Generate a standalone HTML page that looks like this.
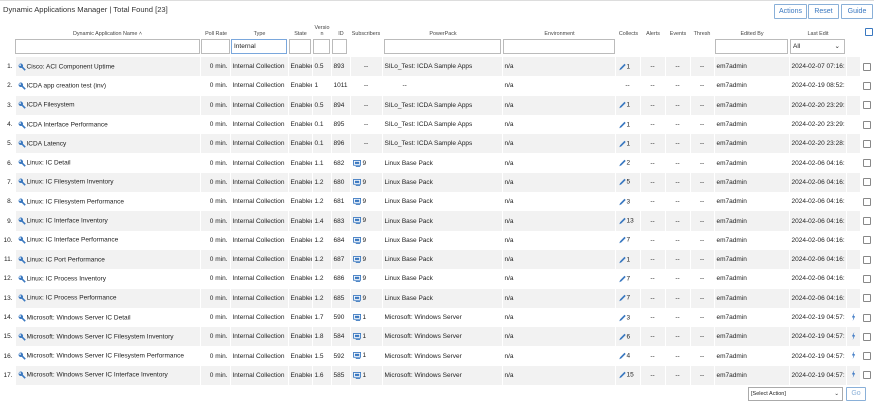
<!DOCTYPE html>
<html><head><meta charset="utf-8"><style>
*{box-sizing:border-box;margin:0;padding:0}
body{width:874px;height:400px;overflow:hidden;background:#fff;font-family:"Liberation Sans",sans-serif;font-size:6.4px;color:#222;position:relative}
.title{position:absolute;left:3px;top:5px;font-size:7.6px;color:#333}
.topline{position:absolute;left:0;top:0;width:874px;height:1px;background:#ddd}
.btn{position:absolute;top:4px;height:15px;border:1px solid #8ab0d8;color:#3a78c0;font-size:7px;text-align:center;line-height:13px;background:#fff;border-radius:1px}
.h{position:absolute;top:31px;font-size:5.4px;color:#444;text-align:center}
.inp{position:absolute;top:39px;height:15px;border:1px solid #bbb;background:#fff;font-size:6.5px;padding-left:2px;line-height:13px}
table{position:absolute;left:0;top:57px;border-collapse:collapse;table-layout:fixed;width:874px}
td{height:19.3px;padding:0 2px;white-space:nowrap;overflow:hidden;border-left:1px solid #fff;font-size:6.5px}
tr.g td{background:#f2f2f2}
tr.g td.n,tr td.n{background:#fff;text-align:right;padding-right:2px;border:0}
td.r{text-align:right}
td.c{text-align:center}
td.ck{background:#fff!important}
.cb{display:inline-block;width:8px;height:8px;border:1px solid #888;border-radius:1px;background:#fff;vertical-align:middle}
.wr{display:inline-block;width:8px;height:8px;vertical-align:middle;margin-right:1px}
.pen{display:inline-block;width:9px;height:8px;vertical-align:middle}
.sub{display:inline-block;width:9px;height:7px;vertical-align:middle;margin-right:1px}
</style></head><body>
<div class="topline"></div>
<div class="title">Dynamic Applications Manager | Total Found [23]</div>
<div class="btn" style="left:774px;width:33px">Actions</div>
<div class="btn" style="left:808px;width:31px">Reset</div>
<div class="btn" style="left:841px;width:32px">Guide</div>
<div class="h" style="left:15px;width:185px">Dynamic Application Name ˄</div>
<div class="h" style="left:201px;width:30px">Poll Rate</div>
<div class="h" style="left:231px;width:57px">Type</div>
<div class="h" style="left:289px;width:23px">State</div>
<div class="h" style="left:312px;width:20px;top:25px;line-height:6px">Versio<br>n</div>
<div class="h" style="left:332px;width:18px">ID</div>
<div class="h" style="left:350px;width:32px">Subscribers</div>
<div class="h" style="left:383px;width:120px">PowerPack</div>
<div class="h" style="left:503px;width:113px">Environment</div>
<div class="h" style="left:616px;width:25px">Collects</div>
<div class="h" style="left:641px;width:24px">Alerts</div>
<div class="h" style="left:666px;width:24px">Events</div>
<div class="h" style="left:690px;width:24px">Thresh</div>
<div class="h" style="left:715px;width:74px">Edited By</div>
<div class="h" style="left:790px;width:56px">Last Edit</div>
<div style="position:absolute;left:865px;top:28px;width:8px;height:8px;border:1px solid #3a78c0;border-radius:1px"></div>
<div class="inp" style="left:15px;width:185px"></div>
<div class="inp" style="left:201px;width:29px"></div>
<div class="inp" style="left:231px;width:56px;border-color:#7aa7dc">Internal</div>
<div class="inp" style="left:289px;width:22px"></div>
<div class="inp" style="left:313px;width:17px"></div>
<div class="inp" style="left:332px;width:15px"></div>
<div class="inp" style="left:384px;width:117px"></div>
<div class="inp" style="left:503px;width:112px"></div>
<div class="inp" style="left:715px;width:73px"></div>
<div class="inp" style="left:790px;width:55px">All<span style="position:absolute;right:4px;top:0">⌄</span></div>
<svg width="0" height="0" style="position:absolute"><defs>
<symbol id="w" viewBox="0 0 10 10"><circle cx="3.5" cy="3.5" r="2.8" fill="#3a78c0"/><circle cx="2.6" cy="2.6" r="1" fill="#fff"/><path d="M4.5 4.5L9 9" stroke="#3a78c0" stroke-width="2"/></symbol>
<symbol id="p" viewBox="0 0 10 10"><path d="M1 9L2 6.5L7.5 1L9 2.5L3.5 8Z" fill="#3a78c0"/></symbol>
<symbol id="s" viewBox="0 0 10 8"><rect x="0.5" y="0.5" width="8" height="5.5" fill="#fff" stroke="#3a78c0"/><rect x="2" y="2" width="5" height="2.5" fill="#3a78c0"/><path d="M3 7.5H8" stroke="#3a78c0"/></symbol>
<symbol id="b" viewBox="0 0 6 10"><path d="M4 0L1 5.5H3L2 10L5 4H3Z" fill="#2f6fc0"/></symbol>
</defs></svg>
<table>
<colgroup><col style="width:15px"><col style="width:185px"><col style="width:30px"><col style="width:58px"><col style="width:24px"><col style="width:19px"><col style="width:19px"><col style="width:32px"><col style="width:120px"><col style="width:113px"><col style="width:25px"><col style="width:25px"><col style="width:25px"><col style="width:24px"><col style="width:75px"><col style="width:57px"><col style="width:14px"><col style="width:14px"></colgroup>
<tbody id="tb"></tbody>
</table>
<div style="position:absolute;left:748px;top:387px;width:95px;height:14px;border:1px solid #aaa;font-size:5.5px;padding-left:2px;line-height:12px">[Select Action]<span style="position:absolute;right:3px">⌄</span></div>
<div class="btn" style="left:846px;top:387px;width:20px;height:14px;line-height:12px;color:#8ab0d8">Go</div>
<script>
var S="SILo_Test: ICDA Sample Apps",L="Linux Base Pack",M="Microsoft: Windows Server";
var d=[
["Cisco: ACI Component Uptime","0.5","893","--",S,"1","2024-02-07 07:16:",0],
["ICDA app creation test (inv)","1","1011","--","--","--","2024-02-19 08:52:",0],
["ICDA Filesystem","0.5","894","--",S,"1","2024-02-20 23:29:",0],
["ICDA Interface Performance","0.1","895","--",S,"1","2024-02-20 23:29:",0],
["ICDA Latency","0.1","896","--",S,"1","2024-02-20 23:28:",0],
["Linux: IC Detail","1.1","682","9",L,"2","2024-02-06 04:16:",0],
["Linux: IC Filesystem Inventory","1.2","680","9",L,"5","2024-02-06 04:16:",0],
["Linux: IC Filesystem Performance","1.2","681","9",L,"3","2024-02-06 04:16:",0],
["Linux: IC Interface Inventory","1.4","683","9",L,"13","2024-02-06 04:16:",0],
["Linux: IC Interface Performance","1.2","684","9",L,"7","2024-02-06 04:16:",0],
["Linux: IC Port Performance","1.2","687","9",L,"1","2024-02-06 04:16:",0],
["Linux: IC Process Inventory","1.2","686","9",L,"7","2024-02-06 04:16:",0],
["Linux: IC Process Performance","1.2","685","9",L,"7","2024-02-06 04:16:",0],
["Microsoft: Windows Server IC Detail","1.7","590","1",M,"3","2024-02-19 04:57:",1],
["Microsoft: Windows Server IC Filesystem Inventory","1.8","584","1",M,"6","2024-02-19 04:57:",1],
["Microsoft: Windows Server IC Filesystem Performance","1.5","592","1",M,"4","2024-02-19 04:57:",1],
["Microsoft: Windows Server IC Interface Inventory","1.6","585","1",M,"15","2024-02-19 04:57:",1]];
var h="";
d.forEach(function(r,i){
var sub=r[3]=="--"?'<td class="c">--</td>':'<td><svg class="sub"><use href="#s"/></svg>'+r[3]+'</td>';
var col=r[5]=="--"?'<td class="c">--</td>':'<td><svg class="pen"><use href="#p"/></svg>'+r[5]+'</td>';
var pp=r[4]=="--"?'<td style="padding-left:20px">--</td>':'<td>'+r[4]+'</td>';
h+='<tr class="'+(i%2==0?'g':'')+'"><td class="n">'+(i+1)+'.</td><td><svg class="wr"><use href="#w"/></svg>'+r[0]+'</td><td class="r">0 min.</td><td>Internal Collection</td><td>Enabled</td><td>'+r[1]+'</td><td>'+r[2]+'</td>'+sub+pp+'<td>n/a</td>'+col+'<td class="c">--</td><td class="c">--</td><td class="c">--</td><td>em7admin</td><td>'+r[6]+'</td><td class="c">'+(r[7]?'<svg width="5" height="8"><use href="#b"/></svg>':'')+'</td><td class="ck c"><span class="cb"></span></td></tr>';
});
document.getElementById("tb").innerHTML=h;
</script>
</body></html>
